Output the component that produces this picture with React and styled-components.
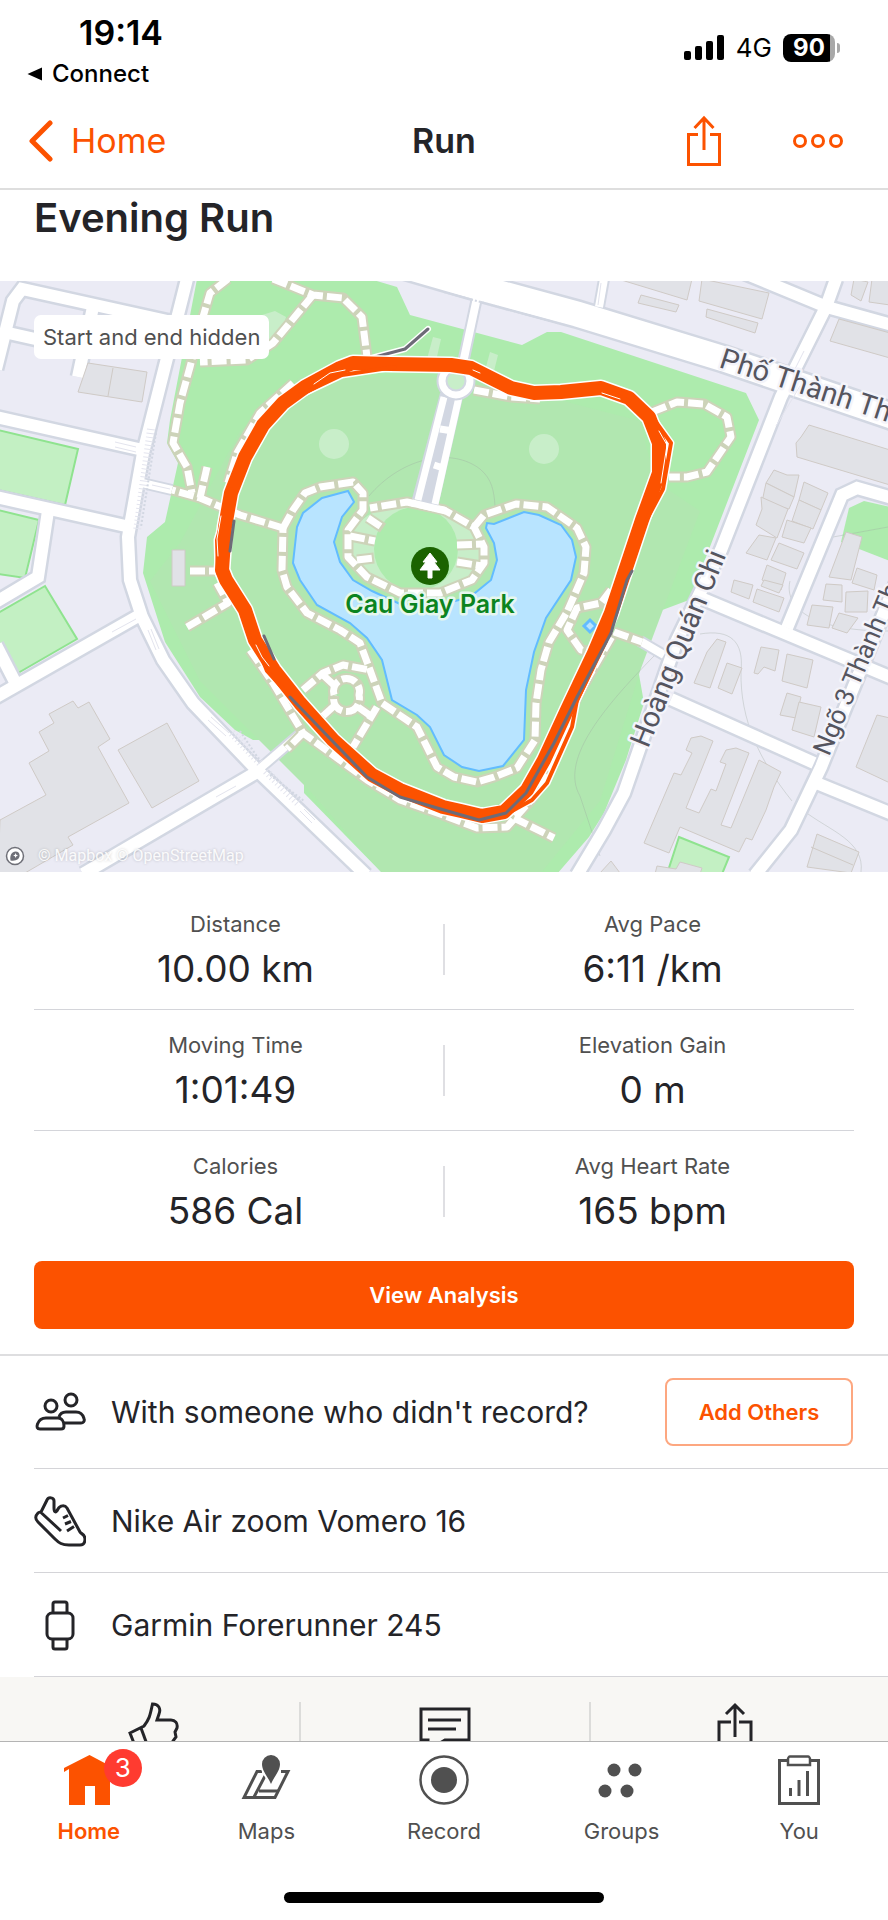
import React from 'react'
import styled, { createGlobalStyle } from 'styled-components'

const stats = [
  [
    { label: 'Distance', value: '10.00 km' },
    { label: 'Avg Pace', value: '6:11 /km' },
  ],
  [
    { label: 'Moving Time', value: '1:01:49' },
    { label: 'Elevation Gain', value: '0 m' },
  ],
  [
    { label: 'Calories', value: '586 Cal' },
    { label: 'Avg Heart Rate', value: '165 bpm' },
  ],
]

const tabs = [
  { name: 'Home', icon: HomeIcon, active: true, count: 3 },
  { name: 'Maps', icon: MapsIcon },
  { name: 'Record', icon: RecordIcon },
  { name: 'Groups', icon: GroupsIcon },
  { name: 'You', icon: YouIcon },
]

export default function App() {
  return (
    <Screen>
      <GlobalStyle />
      <StatusBar>
        <div>
          <Time>19:14</Time>
          <BackToApp type="button">
            <svg width="16" height="14" viewBox="0 0 16 14" aria-hidden="true">
              <path d="M15 0.500V13.500L0.500 7Z" fill="#000" />
            </svg>
            Connect
          </BackToApp>
        </div>
        <Signal>
          <svg width="41" height="26" viewBox="0 0 41 26" aria-hidden="true">
            <rect x="0" y="16" width="7" height="9" rx="2" />
            <rect x="11" y="11" width="7" height="14" rx="2" />
            <rect x="22" y="6" width="7" height="19" rx="2" />
            <rect x="33" y="0" width="7" height="25" rx="2" />
          </svg>
          <Network>4G</Network>
          <Battery>
            <BatteryLevel>90</BatteryLevel>
            <BatteryCap />
          </Battery>
        </Signal>
      </StatusBar>

      <NavBar>
        <BackLink href="#home">
          <svg width="26" height="42" viewBox="0 0 26 42" fill="none" aria-hidden="true">
            <path d="M22 3L4 21L22 39" stroke="#fc5200" strokeWidth="5" strokeLinecap="round" strokeLinejoin="round" />
          </svg>
          Home
        </BackLink>
        <NavTitle>Run</NavTitle>
        <NavActions>
          <IconButton type="button" aria-label="Share">
            <svg width="36" height="52" viewBox="0 0 36 52" fill="none" stroke="#fc5200" strokeWidth="3">
              <path d="M12 19.500H2.500V49.500H33.500V19.500H24" />
              <path d="M18 35V3M8.500 13L18 3L27.500 13" />
            </svg>
          </IconButton>
          <IconButton type="button" aria-label="More">
            <svg width="52" height="16" viewBox="0 0 52 16" fill="none" stroke="#fc5200" strokeWidth="3">
              <circle cx="8" cy="8" r="5.500" />
              <circle cx="26" cy="8" r="5.500" />
              <circle cx="44" cy="8" r="5.500" />
            </svg>
          </IconButton>
        </NavActions>
      </NavBar>

      <Content>
        <Title>Evening Run</Title>
        <MapArea>
          <RouteMap />
          <MapBadge>Start and end hidden</MapBadge>
          <Attribution>
            <svg width="20" height="20" viewBox="0 0 20 20" aria-hidden="true">
              <circle cx="10" cy="10" r="8.500" fill="#fff" stroke="#6f7078" strokeWidth="1.500" />
              <path d="M5.500 14.500C4.500 9 7 5.500 10.500 5.500A4.200 4.200 0 0 1 14.600 9.500C14.600 13 11 15.500 5.500 14.500Z" fill="#6f7078" />
              <path d="M10.600 7L11.300 8.800L13 9.500L11.300 10.200L10.600 12L9.900 10.200L8.200 9.500L9.900 8.800Z" fill="#fff" />
            </svg>
            © Mapbox © OpenStreetMap
          </Attribution>
        </MapArea>

        <Stats>
          {stats.map((row) => (
            <StatRow key={row[0].label}>
              {row.map((stat) => (
                <Stat key={stat.label}>
                  <StatLabel>{stat.label}</StatLabel>
                  <StatValue>{stat.value}</StatValue>
                </Stat>
              ))}
            </StatRow>
          ))}
        </Stats>
        <AnalysisButton type="button">View Analysis</AnalysisButton>

        <Details>
          <DetailRow>
            <PeopleIcon />
            <DetailText>With someone who didn't record?</DetailText>
            <AddButton type="button">Add Others</AddButton>
          </DetailRow>
          <DetailRow>
            <ShoeIcon />
            <DetailText>Nike Air zoom Vomero 16</DetailText>
          </DetailRow>
          <DetailRow>
            <WatchIcon />
            <DetailText>Garmin Forerunner 245</DetailText>
          </DetailRow>
        </Details>

        <Social>
          <SocialButton type="button" aria-label="Give kudos">
            <ThumbIcon />
          </SocialButton>
          <SocialButton type="button" aria-label="Comment">
            <CommentIcon />
          </SocialButton>
          <SocialButton type="button" aria-label="Share activity">
            <ShareIcon />
          </SocialButton>
        </Social>
      </Content>

      <TabBar>
        <Tabs>
          {tabs.map(({ name, icon: Icon, active, count }) => (
            <Tab key={name} href={`#${name.toLowerCase()}`} $active={active}>
              <TabIcon>
                <Icon />
                {count && <Count>{count}</Count>}
              </TabIcon>
              {name}
            </Tab>
          ))}
        </Tabs>
        <HomeIndicator />
      </TabBar>
    </Screen>
  )
}

const casedRoads = [
  'M-4 88L13 20L22 8L172 41',
  'M4 51L62 64',
  'M93 26L78 96',
  'M-4 136L143 169',
  'M-4 216L130 246',
  'M48 230L38 296L-4 321',
  'M-4 416L140 334',
  'M-4 364L15 401',
  'M83 593L257 491',
  'M730 -14L827 26L892 44',
  'M892 217L857 207L842 214L787 347',
  'M696 315L892 397',
  'M671 418L814 482',
  'M905 280L821 486L791 549L755 594',
  'M814 501L892 533',
  'M187 -2L143 172L128 256L130 299L142 336L163 379L193 422L257 489L366 594',
  'M836 -2L826 26L781 116L721 269L677 359L624 512L604 549L577 594',
]

const narrowRoads = [
  'M257 490L300 453',
  'M478 12L463 82',
  'M604 -2L599 26',
  'M640 360L664 374',
  'M142 202L172 209',
]

const footPaths = [
  'M283 247L293 229L305 212L320 206L353 201L363 212L363 229L348 249L348 276L367 296L400 312L440 312L472 299L484 282L484 266L474 246L444 229L407 221L370 227',
  'M474 246L484 234L516 223L547 226L577 247L586 266L584 292L567 331L549 361L541 389L536 422L535 459L517 487L494 496L477 501L454 496L437 486L417 446L382 422L370 389L360 362L340 349L307 332L287 306L282 289L283 247',
  'M283 247L240 234L200 217L172 209',
  'M228 -2L210 12L203 36L190 86L180 122L173 162L187 186L192 212',
  'M273 -2L313 14L343 17L362 36L367 76',
  'M313 14L273 62L247 79L200 81',
  'M293 102L260 132L237 172L228 202',
  'M207 186L200 217',
  'M190 290L216 290',
  'M187 346L228 322L217 302',
  'M250 369L273 402L303 452L367 499L400 519L443 534L477 547L507 546L531 519L547 496L577 416L614 352',
  'M514 537L554 557',
  'M303 452L287 468',
  'M614 351L642 361',
  'M652 131L677 121L704 123L727 136L731 156L707 191L687 196L669 196',
  'M303 409L323 392L343 384L370 389',
  'M334 414A13 13 0 1 1 359 414A13 13 0 1 1 334 414',
  'M323 394L335 405',
  'M334 425L323 435',
  'M358 426L372 436',
  'M377 426L353 466',
  'M611 309L601 322L577 327L567 349L581 369L590 370',
  'M474 109L511 116L540 118',
  'M368 237L383 247',
  'M350 255L375 260',
  'M357 279L374 277',
  'M457 264L482 263',
  'M457 281L482 285',
]

const buildings = [
  '88,82 147,91 142,121 78,111',
  '172,269 185,269 185,305 172,305',
  '0,539 46,514 29,482 49,470 39,451 54,442 49,433 73,420 78,427 89,421 110,458 98,466 129,522 68,556 73,564 25,592 -2,592',
  '167,442 199,500 152,527 118,469',
  '618,-2 692,-2 687,19',
  '641,14 679,24 676,31 638,22',
  '702,-2 769,12 762,38 699,20',
  '707,28 758,42 755,52 706,36',
  '854,-2 868,1 861,20 851,14',
  '872,-2 890,-2 890,24 869,21',
  '839,38 890,52 890,77 830,60',
  '809,144 890,169 890,204 797,176 796,162 801,156',
  '774,189 787,194 799,194 794,216 766,202',
  '766,202 794,216 789,228 762,221',
  '761,216 788,228 777,257 756,244 762,228',
  '804,201 828,212 821,229 799,219',
  '799,219 821,229 813,248 792,240',
  '787,239 811,247 804,262 782,256',
  '759,254 776,257 767,279 746,272',
  '779,262 804,272 797,288 771,279',
  '767,284 786,292 781,309 762,299',
  '857,287 877,294 874,309 852,302',
  '734,299 753,304 749,318 731,311',
  '757,308 784,317 779,331 753,321',
  '764,299 783,304 779,312 761,305',
  '826,303 842,304 842,321 823,319',
  '846,311 868,310 867,331 845,331',
  '812,324 833,326 829,347 807,344',
  '839,332 858,337 847,352 832,347',
  '717,358 726,361 710,407 694,402 707,371',
  '727,382 742,387 732,413 718,407',
  '761,366 779,369 775,390 764,386 758,393 754,392',
  '787,373 813,379 807,407 782,400',
  '787,412 801,416 796,437 780,434',
  '799,421 821,426 814,456 792,449',
  '877,434 890,437 890,502 856,486',
  '701,455 713,460 686,527 699,532 711,508 716,510 726,483 720,481 726,469 736,467 749,472 721,544 731,547 759,479 781,491 774,506 766,529 752,559 746,557 739,571 680,546 669,572 644,562 674,492 681,494 692,472 686,469 691,457',
  '611,580 620,592 600,592',
  '817,553 859,571 851,592 807,586',
]

const track =
  'M353 82L340 87L305 106L283 122L263 144L245 176L231 212L225 246L222 289L226 299L245 329L255 359L274 389L300 422L333 459L372 494L400 509L443 526L461 530L482 535L504 531L527 509L544 479L567 429L594 372L611 332L622 299L631 272L642 239L659 192L659 162L649 136L629 117L601 107L561 111L534 112L511 107L471 87L451 84L390 83Z'

const strays = [
  'M648 130L671 162L663 208L647 238',
  'M606 360L577 419L572 446L547 502L532 519L512 530',
  'M232 208L217 259L218 292',
  'M300 114L342 94L395 86',
  'M590 106L606 105L634 118',
  'M252 352L267 390L296 422',
]

function RouteMap() {
  return (
    <MapSvg viewBox="0 0 888 591" role="img" aria-label="Map of the run around Cau Giay Park">
      <rect width="888" height="591" fill="#ebebf5" />

      {/* park, sport fields and gardens */}
      <path d="M197 -2L170 139L167 162L178 182L165 241L147 256L143 292L165 361L200 416L235 449L253 459H275L304 486V512L383 593H557L589 556L604 532L626 479L644 422L637 382L657 331L689 319L701 289L759 139L746 112L561 51H547L522 64L410 34L397 6L370 -2Z" fill="#adebad" />
      <path d="M240 150L300 96L470 96L640 140L655 200L700 230L640 390L600 520L540 593H383L310 510L200 400L150 300L180 262Z" fill="#b1e7b0" />
      <g fill="#c3f0c3" stroke="#8fe38f" strokeWidth="2">
        <path d="M-2 149L78 168L65 224L-2 209Z" />
        <path d="M-2 229L39 239L25 297L-2 293Z" />
        <path d="M-2 332L45 305L77 358L18 392L-2 360Z" />
        <path d="M679 556L729 576L722 593H667Z" />
      </g>
      <path d="M864 220L890 226V280L841 261L849 227Z" fill="#adebad" />
      <g fill="#c8eec9">
        <circle cx="334" cy="163" r="15" />
        <circle cx="544" cy="168" r="15" />
        <path d="M262 34L275 30L286 36L282 50L268 60Z" />
        <path d="M433 56L441 58L436 80L427 78ZM490 71L498 74L494 90L486 86Z" />
        <ellipse cx="416" cy="267" rx="68" ry="46" />
      </g>
      <circle cx="416" cy="268" r="42" fill="#adebad" />
      <path d="M369 215C400 178 450 165 480 188C492 198 494 210 495 225M655 374C600 430 560 480 580 515L600 575M700 353C730 348 744 360 741 390C740 440 760 480 792 520M804 530C830 550 865 560 861 591M833 256L888 246M790 300C785 320 800 350 888 350" fill="none" stroke="#9fa8a0" strokeOpacity="0.35" strokeWidth="1" />

      {/* roads, casing first */}
      <g fill="none" stroke="#d2d7e2" strokeWidth="17">
        {casedRoads.map((d) => (
          <path key={d} d={d} />
        ))}
        <path d="M380 -22L470 4L577 33L724 78L900 138" strokeWidth="30" />
      </g>
      <g fill="none" stroke="#d2d7e2" strokeWidth="12">
        {narrowRoads.map((d) => (
          <path key={d} d={d} />
        ))}
      </g>
      <g fill="none" stroke="#fff" strokeWidth="8">
        {narrowRoads.map((d) => (
          <path key={d} d={d} />
        ))}
      </g>
      <g fill="none" stroke="#fff" strokeWidth="12">
        {casedRoads.map((d) => (
          <path key={d} d={d} />
        ))}
        <path d="M380 -22L470 4L577 33L724 78L900 138" strokeWidth="25" />
      </g>
      <g fill="none" stroke="#e3e4ee" strokeWidth="1">
        <path d="M115 161L136 166M115 166L136 171M152 204L170 208M112 351L136 338M148 349L156 369M151 348L159 368M208 439L226 455M211 436L229 452M216 516L236 505M300 530L312 542M304 528L315 539M800 105L776 145M804 70L795 88M601 2L598 24" />
        <path d="M151 148L137 250M232 452L262 484M266 490L300 524" strokeWidth="8" strokeDasharray="1 3" />
      </g>
      <path d="M156 152L141 246M240 450L260 480M270 494L304 520M444 11L568 45" fill="none" stroke="#d2d7e2" strokeWidth="2" strokeDasharray="2 2" />

      {/* lake */}
      <path d="M322 217L348 210L354 221L342 236L334 261L340 281L353 299L372 310L400 323L440 324L470 316L491 299L497 279L494 262L486 247L487 242L494 243L524 231L539 234L561 244L572 259L576 276L571 299L546 337L534 371L526 409L524 459L503 485L479 490L462 486L444 474L430 446L417 434L392 419L382 379L367 357L350 342L317 324L300 299L293 282L297 246L303 232Z" fill="#b8e4ff" stroke="#62bcff" strokeWidth="2" />
      <path d="M590 339L596 345L590 351L584 345Z" fill="#b8e4ff" stroke="#62bcff" strokeWidth="3" />

      {/* walkways */}
      <g fill="none" stroke="#cdd3b9" strokeWidth="11" strokeLinejoin="round">
        {footPaths.map((d) => (
          <path key={d} d={d} />
        ))}
      </g>
      <g fill="none" stroke="#fff" strokeWidth="7" strokeDasharray="15 4" strokeLinejoin="round">
        {footPaths.map((d) => (
          <path key={d} d={d} />
        ))}
      </g>
      <path d="M440 112L464 112L438 226L412 218Z" fill="#d2d7e2" />
      <path d="M444 116L418 219M459 116L435 223M440 148L453 150M434 184L446 188M412 222L446 230" fill="none" stroke="#fff" strokeWidth="7" />
      <circle cx="456" cy="100" r="14" fill="#c8eec9" stroke="#d2d7e2" strokeWidth="11" />
      <circle cx="456" cy="100" r="14" fill="none" stroke="#fff" strokeWidth="7" />

      <g fill="#e1e2e7" stroke="#cfcac6" strokeWidth="1">
        {buildings.map((points) => (
          <polygon key={points} points={points} />
        ))}
        <polygon points="846,251 862,256 851,299 829,296" />
        <path d="M113 87L108 115M811 566L853 584" />
        <path d="M657 585L676 588L680 581L702 587L700 593H655Z" />
      </g>

      {/* recorded route */}
      <g fill="none" strokeLinejoin="round" strokeLinecap="round">
        <path d="M360 80L405 68L428 48" stroke="#fff" strokeWidth="6" />
        <path d="M360 80L405 68L428 48" stroke="#6d6b77" strokeWidth="3" />
        {strays.map((d) => (
          <path key={d} d={d} stroke="#fff" strokeWidth="7" />
        ))}
        <path d={track} stroke="#fff" strokeWidth="17" />
        <path d={track} stroke="#fc5200" strokeWidth="14" />
        {strays.map((d) => (
          <path key={d} d={d} stroke="#fc5200" strokeWidth="4" />
        ))}
        <path d="M659 150L667 164L661 202M221 235L217 258L218 275M314 103L330 92L345 89M256 364L262 376L269 385M473 89L480 92M602 112L620 118" stroke="#fff" strokeWidth="1" />
        <path d="M632 290L627 299L611 352L577 416L554 462L526 512L506 532L479 539L444 529L400 516L367 496L290 416M234 240L230 270M264 355L274 378" stroke="#6d6b77" strokeWidth="3" />
      </g>

      {/* place names */}
      <g fontFamily="Roboto, sans-serif" fill="#55555f" stroke="#f4f4fa" strokeWidth="5" strokeLinejoin="round" paintOrder="stroke">
        <text fontSize="29" transform="translate(718 86) rotate(18)">Phố Thành Th</text>
        <text fontSize="29" transform="translate(648 468) rotate(-68)">Hoàng Quán Chi</text>
        <text fontSize="26" transform="translate(829 476) rotate(-67)">Ngõ 3 Thành Th</text>
      </g>
      <circle cx="430" cy="285" r="19" fill="#1b6300" />
      <path d="M430 272L437 281H434L440 289H432V297H428V289H420L426 281H423Z" fill="#fff" stroke="#fff" strokeLinejoin="round" />
      <text x="430" y="332" textAnchor="middle" fontFamily="Inter, sans-serif" fontSize="25" fontWeight="600" fill="#0b8420" stroke="#e6f7ee" strokeWidth="5" strokeLinejoin="round" paintOrder="stroke">
        Cau Giay Park
      </text>
    </MapSvg>
  )
}

function PeopleIcon() {
  return (
    <LineIcon viewBox="0 0 52 52">
      <circle cx="17" cy="20" r="6" />
      <circle cx="37" cy="14" r="6" />
      <path d="M12 32H24C28 32 30 36 30 40C30 42 29 43 27 43H6C3 43 2.500 41 3.500 38C5 34 8 32 12 32Z" />
      <path d="M25 31C26 27.500 28.500 26 32 26H42C47 26 49 29 50 32.500C51 35.500 49 37 47 37H30" />
    </LineIcon>
  )
}

function ShoeIcon() {
  return (
    <LineIcon viewBox="0 0 52 52">
      <path d="M7 17L13 5C14.500 1.500 20 2.500 20 6V13C20 18 22 18 24 14C26 10 31 10 33 13L46 37C47 39 51 39 51 44C51 48 49 50 46 50H35C28 50 25 48 21 44L4 27C1 24 1 21 4 18C5 17 6.500 17 7 17.500L27 36" />
      <path d="M29 23L34 20.500M31 29L37 26.500M33 36L40 31.500" />
    </LineIcon>
  )
}

function WatchIcon() {
  return (
    <LineIcon viewBox="0 0 52 52">
      <rect x="13" y="14" width="26" height="26" rx="5" />
      <path d="M19 14V5C19 3.500 20 3 21 3H31C32.500 3 33 4 33 5V14M19 40V48C19 49.500 20 50 21 50H31C32.500 50 33 49 33 48V40" />
    </LineIcon>
  )
}

function ThumbIcon() {
  return (
    <LineIcon viewBox="0 0 52 52">
      <path d="M2 31L16 24C22 16 22 13 24.500 2C31 2 33 7 31 12L29 18H43C47 18 50 21 49 26L47 30L48 35L45 39V44C45 48 41 50 36 50H24L9 49Z" />
      <path d="M13 26L20 45" />
    </LineIcon>
  )
}

function CommentIcon() {
  return (
    <LineIcon viewBox="0 0 52 52">
      <path d="M2 7H50V38H26L9 48V38H2Z" />
      <path d="M9 18H42M9 27H37" />
    </LineIcon>
  )
}

function ShareIcon() {
  return (
    <LineIcon viewBox="0 0 52 52">
      <path d="M22 20H10V50H42V20H30M26 35V3M17 12L26 3L35 12" />
    </LineIcon>
  )
}

function HomeIcon() {
  return (
    <svg width="50" height="50" viewBox="0 0 50 50" fill="#fc5200" aria-hidden="true">
      <path d="M25.500 0L50 13V17L46 15V50H31V31H21V50H5V14L0 17V13Z" />
    </svg>
  )
}

function MapsIcon() {
  return (
    <svg width="50" height="50" viewBox="0 0 50 50" fill="none" stroke="#505050" strokeWidth="3" aria-hidden="true">
      <path d="M21 16.500H16L3 42.500H34L47 16.500H40" />
      <path d="M13 42L24 21M18 36H37" />
      <path d="M30 29C26 20 21 16 21 9A9 9 0 0 1 39 9C39 16 34 20 30 29Z" fill="#505050" stroke="#fff" strokeWidth="4" paintOrder="stroke" />
    </svg>
  )
}

function RecordIcon() {
  return (
    <svg width="50" height="50" viewBox="0 0 50 50" aria-hidden="true">
      <circle cx="25" cy="25" r="23.500" fill="none" stroke="#505050" strokeWidth="2.500" />
      <circle cx="25" cy="25" r="13" fill="#505050" />
    </svg>
  )
}

function GroupsIcon() {
  return (
    <svg width="50" height="50" viewBox="0 0 50 50" fill="#505050" aria-hidden="true">
      <circle cx="17" cy="15" r="6.500" />
      <circle cx="38" cy="15" r="6.500" />
      <circle cx="8" cy="36" r="6.500" />
      <circle cx="30" cy="36" r="6.500" />
    </svg>
  )
}

function YouIcon() {
  return (
    <svg width="50" height="50" viewBox="0 0 50 50" fill="none" stroke="#505050" strokeWidth="3" aria-hidden="true">
      <path d="M14 5.500H5.500V48.500H44.500V5.500H36" />
      <path d="M16 1.500H34C35 1.500 36 3 36 4V10H14V4C14 3 15 1.500 16 1.500Z" strokeWidth="2.500" />
      <path d="M16.500 33V41M25 25V41M33.500 16V41" />
    </svg>
  )
}

const GlobalStyle = createGlobalStyle`
  body {
    margin: 0;
    background: #fff;
  }

  * {
    box-sizing: border-box;
  }

  button {
    padding: 0;
    border: 0;
    background: none;
    color: inherit;
    font: inherit;
    cursor: pointer;
  }

  svg {
    display: block;
    flex: none;
  }
`

const Screen = styled.div`
  display: flex;
  flex-direction: column;
  height: 100vh;
  background: #fff;
  color: #242428;
  font-family: Inter, sans-serif;
`

const StatusBar = styled.div`
  display: flex;
  justify-content: space-between;
  align-items: flex-start;
  padding: 13px 48px 0 27px;
  color: #000;
`

const Time = styled.div`
  padding-left: 52px;
  font-size: 34px;
  font-weight: 600;
  line-height: 40px;
`

const BackToApp = styled.button`
  display: flex;
  align-items: center;
  gap: 9px;

  && {
    font-size: 24px;
    font-weight: 500;
    line-height: 41px;
  }
`

const Signal = styled.div`
  display: flex;
  align-items: center;
  gap: 11px;
  padding-top: 21px;
`

const Network = styled.span`
  font-size: 26px;
  line-height: 28px;
`

const Battery = styled.div`
  display: flex;
  align-items: center;
  gap: 2px;
`

const BatteryLevel = styled.div`
  width: 52px;
  height: 28px;
  border-radius: 8px;
  background: linear-gradient(90deg, #000 90%, #a8a8a8 90%);
  color: #fff;
  font-size: 24px;
  font-weight: 700;
  line-height: 28px;
  text-align: center;
`

const BatteryCap = styled.div`
  width: 3px;
  height: 10px;
  border-radius: 0 4px 4px 0;
  background: #a8a8a8;
`

const NavBar = styled.nav`
  display: grid;
  grid-template-columns: 1fr auto 1fr;
  align-items: center;
  height: 96px;
  padding: 0 28px;
  border-bottom: 2px solid #dedede;
`

const BackLink = styled.a`
  display: flex;
  align-items: center;
  gap: 17px;
  color: #fc5200;
  font-size: 34px;
  line-height: 42px;
  text-decoration: none;
`

const NavTitle = styled.div`
  font-size: 34px;
  font-weight: 600;
  line-height: 42px;
`

const NavActions = styled.div`
  display: flex;
  justify-content: flex-end;
  align-items: center;
  gap: 70px;
  padding-right: 16px;
`

const IconButton = styled.button`
  display: flex;
`

const Content = styled.main`
  flex: 1;
  min-height: 0;
  overflow-y: auto;
  scrollbar-width: none;
`

const Title = styled.h1`
  margin: 0;
  padding: 4px 34px 39px;
  font-size: 40px;
  font-weight: 600;
  line-height: 48px;
`

const MapArea = styled.div`
  position: relative;
`

const MapSvg = styled.svg`
  width: 100%;
  height: auto;
`

const MapBadge = styled.div`
  position: absolute;
  top: 34px;
  left: 34px;
  padding: 0 9px;
  border-radius: 7px;
  background: #fff;
  color: #505050;
  font-size: 22px;
  line-height: 44px;
`

const Attribution = styled.div`
  position: absolute;
  bottom: 6px;
  left: 5px;
  display: flex;
  align-items: center;
  gap: 13px;
  color: rgba(255, 255, 255, 0.9);
  font-family: Roboto, sans-serif;
  font-size: 16px;
  line-height: 20px;
  text-shadow: 0 0 3px rgba(0, 0, 0, 0.2);
`

const Stats = styled.dl`
  margin: 0;
  padding: 17px 34px 10px;
`

const StatRow = styled.div`
  position: relative;
  display: flex;
  gap: 14px;
  padding: 21px 0 18px;

  & + & {
    border-top: 1px solid #d4d5da;
  }

  &::after {
    content: '';
    position: absolute;
    top: 35px;
    bottom: 34px;
    left: calc(50% - 1px);
    width: 2px;
    background: #dfdfe3;
  }
`

const Stat = styled.div`
  flex: 1;
  text-align: center;
`

const StatLabel = styled.dt`
  margin-bottom: 8px;
  color: #505050;
  font-size: 22px;
  line-height: 28px;
`

const StatValue = styled.dd`
  margin: 0;
  font-size: 37px;
  line-height: 45px;
`

const AnalysisButton = styled.button`
  display: block;
  width: calc(100% - 68px);
  margin: 0 34px 25px;

  && {
    border-radius: 8px;
    background: #fc5200;
    color: #fff;
    font-size: 22px;
    font-weight: 600;
    line-height: 68px;
  }
`

const Details = styled.div`
  border-top: 2px solid #dedee0;
`

const DetailRow = styled.div`
  display: flex;
  align-items: center;
  gap: 25px;
  min-height: 104px;
  margin-left: 34px;
  padding: 22px 35px 22px 0;
  border-bottom: 1px solid #d4d4d8;
`

const LineIcon = styled.svg.attrs({ 'aria-hidden': true })`
  width: 52px;
  height: 52px;
  fill: none;
  stroke: #242428;
  stroke-width: 3;
`

const DetailText = styled.span`
  flex: 1;
  font-size: 30px;
  line-height: 40px;
`

const AddButton = styled.button`
  && {
    width: 188px;
    height: 68px;
    border: 2px solid #fda780;
    border-radius: 8px;
    color: #fc5200;
    font-size: 22px;
    font-weight: 600;
  }
`

const Social = styled.div`
  display: grid;
  grid-template-columns: repeat(3, 1fr);
  padding: 25px 9px;
  background: #f8f7f4;
`

const SocialButton = styled.button`
  display: flex;
  justify-content: center;
  height: 60px;

  && + & {
    border-left: 2px solid #dcdcda;
  }
`

const TabBar = styled.footer`
  padding: 13px 0 17px;
  border-top: 1px solid #b4b4b4;
  background: #fff;
`

const Tabs = styled.nav`
  display: flex;
`

const Tab = styled.a`
  flex: 1;
  display: flex;
  flex-direction: column;
  align-items: center;
  gap: 12px;
  color: ${(props) => (props.$active ? '#fc5200' : '#505050')};
  font-size: 22px;
  font-weight: ${(props) => (props.$active ? 600 : 400)};
  line-height: 28px;
  text-decoration: none;
`

const TabIcon = styled.div`
  position: relative;
`

const Count = styled.span`
  position: absolute;
  top: -6px;
  left: 40px;
  width: 38px;
  height: 38px;
  border-radius: 50%;
  background: #ff3b30;
  color: #fff;
  font-size: 26px;
  font-weight: 400;
  line-height: 38px;
  text-align: center;
`

const HomeIndicator = styled.div`
  width: 36%;
  height: 11px;
  margin: 47px auto 0;
  border-radius: 6px;
  background: #000;
`
